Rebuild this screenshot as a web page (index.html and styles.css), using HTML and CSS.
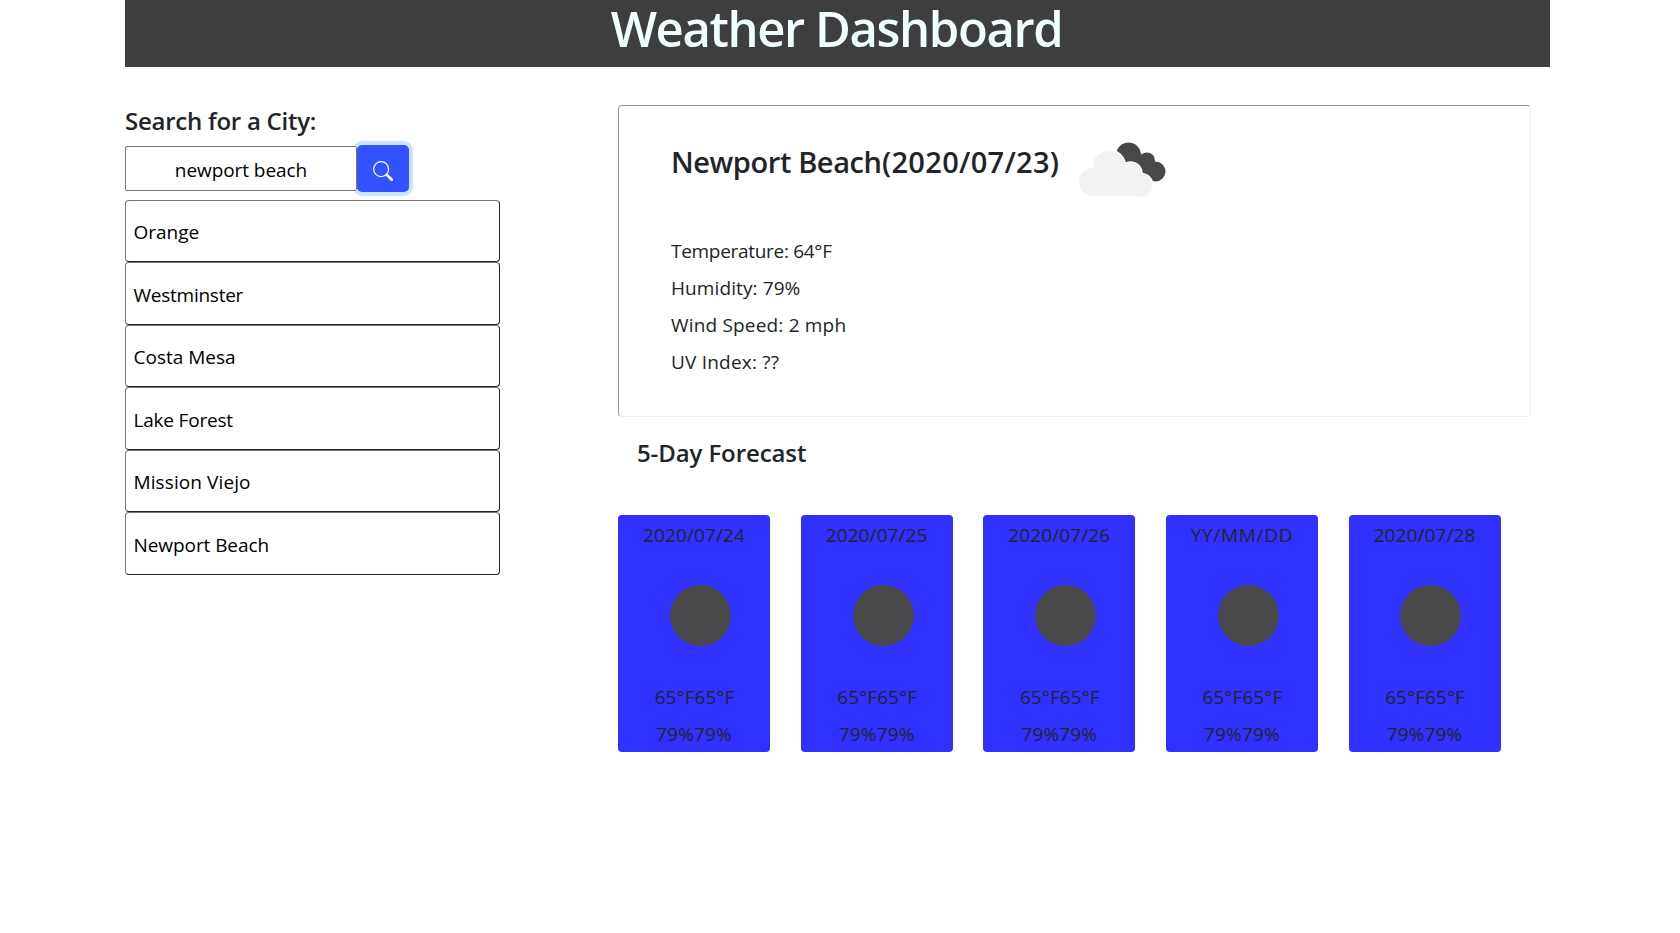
FILE: index.html
```
<!DOCTYPE html>
<html lang="en">
<head>
<meta charset="utf-8">
<title>Weather Dashboard</title>
<link rel="stylesheet" href="styles.css">
</head>
<body>
<div class="container">
  <header class="header"><h1>Weather Dashboard</h1></header>
  <div class="columns">
    <aside class="sidebar">
      <h2 class="search-title">Search for a City:</h2>
      <div class="search">
        <input class="search-input" type="text" value="newport beach" aria-label="City">
        <button class="search-button" aria-label="Search">
          <svg width="20" height="20" viewBox="0 0 16 16" fill="none" stroke="#fff"><circle cx="6.5" cy="6.5" r="6" stroke-width="1"/><path d="M11 11l4 4" stroke-width="2" stroke-linecap="round"/></svg>
        </button>
      </div>
      <ul class="history">
        <li class="t-orange">Orange</li>
        <li class="t-west">Westminster</li>
        <li class="t-costa">Costa Mesa</li>
        <li class="t-lake">Lake Forest</li>
        <li class="t-mission">Mission Viejo</li>
        <li>Newport Beach</li>
      </ul>
    </aside>
    <main class="main">
      <section class="current">
        <div class="current-head">
          <h2 class="city">Newport Beach</h2><h2 class="today">(2020/07/23)</h2>
          <svg class="clouds" width="88" height="56" viewBox="0 0 88 56">
            <g fill="#48484a"><circle cx="50.500" cy="13" r="12.500"/><circle cx="69" cy="18.500" r="8"/><circle cx="77.500" cy="29.500" r="10"/><path d="M45 13L69 12L79 28L75 39H60z"/></g>
            <g fill="#f2f2f0" stroke="#fff" stroke-width="1.500"><circle cx="31" cy="24.500" r="16.500"/><circle cx="52.500" cy="31.500" r="11.500"/><circle cx="63" cy="43.500" r="12"/></g>
            <g fill="#f2f2f0"><circle cx="31" cy="24.500" r="16"/><circle cx="52.500" cy="31.500" r="11"/><circle cx="15" cy="40" r="14"/><circle cx="63" cy="43" r="11"/><path d="M15 54V33L32 20L55 28L64 40V54z"/></g>
          </svg>
        </div>
        <p class="t-temp">Temperature: 64°F</p>
        <p class="t-hum">Humidity: 79%</p>
        <p class="t-wind">Wind Speed: 2 mph</p>
        <p class="t-uv">UV Index: ??</p>
      </section>
      <h2 class="forecast-title">5-Day Forecast</h2>
      <section class="forecast">
        <article class="day"><p class="date">2020/07/24</p><span class="moon"></span><p class="temp">65°F65°F</p><p>79%79%</p></article>
        <article class="day"><p class="date">2020/07/25</p><span class="moon"></span><p class="temp">65°F65°F</p><p>79%79%</p></article>
        <article class="day"><p class="date">2020/07/26</p><span class="moon"></span><p class="temp">65°F65°F</p><p>79%79%</p></article>
        <article class="day"><p class="date placeholder">YY/MM/DD</p><span class="moon"></span><p class="temp">65°F65°F</p><p>79%79%</p></article>
        <article class="day"><p class="date">2020/07/28</p><span class="moon"></span><p class="temp">65°F65°F</p><p>79%79%</p></article>
      </section>
    </main>
  </div>
</div>
</body>
</html>
```

FILE: styles.css
```
* { box-sizing: border-box; margin: 0; padding: 0; }
body { background: #fff; color: #212529; font: 370 19px/30px "Open Sans", sans-serif; }
h1, h2 { font-weight: 560; }
.container { width: 1425px; margin-left: 125px; }
.header { height: 67px; background: #3e3e3e; text-align: center; }
h1 { color: #f0ffff; font-size: 49px; line-height: 56px; font-weight: 600; letter-spacing: -1.4px; padding-right: 2px; }
.columns { display: flex; gap: 118px; padding-top: 38px; }
.sidebar { width: 375px; }
.search-title { font-size: 24px; line-height: 30px; letter-spacing: -.25px; padding-top: 1px; }
.search { display: flex; height: 47px; margin-top: 9px; }
.search-input { position: relative; z-index: 1; width: 232px; height: 45px; margin-top: 1px; padding-top: 2px; border: 1px solid #767676; border-radius: 2px; text-align: center; font: inherit; letter-spacing: -.07px; color: #000; background: #fff; outline: 0; }
.search-button { width: 52px; height: 47px; border: 0; border-radius: 5px; background: #3352ff; box-shadow: 0 0 0 4px #cce4ff; display: flex; align-items: center; justify-content: center; padding-top: 5px; }
.history { list-style: none; margin-top: 7.95px; color: #000; letter-spacing: -.07px; }
.history li { height: 62.5px; padding: 16.5px 7.5px 0; border: 1px solid; border-color: #767676 #212121 #212121 #767676; border-radius: 4px; }
.history .t-orange { letter-spacing: 0; }
.history .t-west { letter-spacing: -.25px; }
.history .t-costa { letter-spacing: 0; }
.history .t-lake { letter-spacing: -.2px; }
.history .t-mission { letter-spacing: .1px; }
.main { width: 913px; }
.current { height: 312px; padding: 36px 52px 0; border: 1px solid; border-color: #999 #eee #eee #999; border-radius: 4px; }
.current-head { display: flex; height: 92px; }
.current-head h2 { font-size: 29px; line-height: 40px; }
.city { width: 211px; letter-spacing: -.4px; white-space: nowrap; }
.today { letter-spacing: .3px; }
.clouds { margin-left: 19px; }
.current p { height: 37px; padding-top: 2px; }
.t-temp { letter-spacing: -.3px; }
.t-hum { letter-spacing: .1px; }
.t-wind { letter-spacing: .18px; }
.t-uv { letter-spacing: .2px; }
.forecast-title { font-size: 24px; line-height: 30px; letter-spacing: -.1px; padding: 21px 0 0 19px; height: 98px; }
.forecast { display: grid; grid-template-columns: repeat(5, 152px); column-gap: 30.65px; }
.day { height: 237px; background: #3030ff; border-radius: 4px; padding-top: 5px; text-align: center; letter-spacing: .15px; display: flex; flex-direction: column; align-items: center; }
.date { letter-spacing: .1px; }
.placeholder { letter-spacing: .7px; }
.moon { width: 61px; height: 61px; margin: 35px 0 0 12.8px; border-radius: 50%; background: #48484a; }
.temp { margin: 36px 0 7px 1px; letter-spacing: .05px; }
```
